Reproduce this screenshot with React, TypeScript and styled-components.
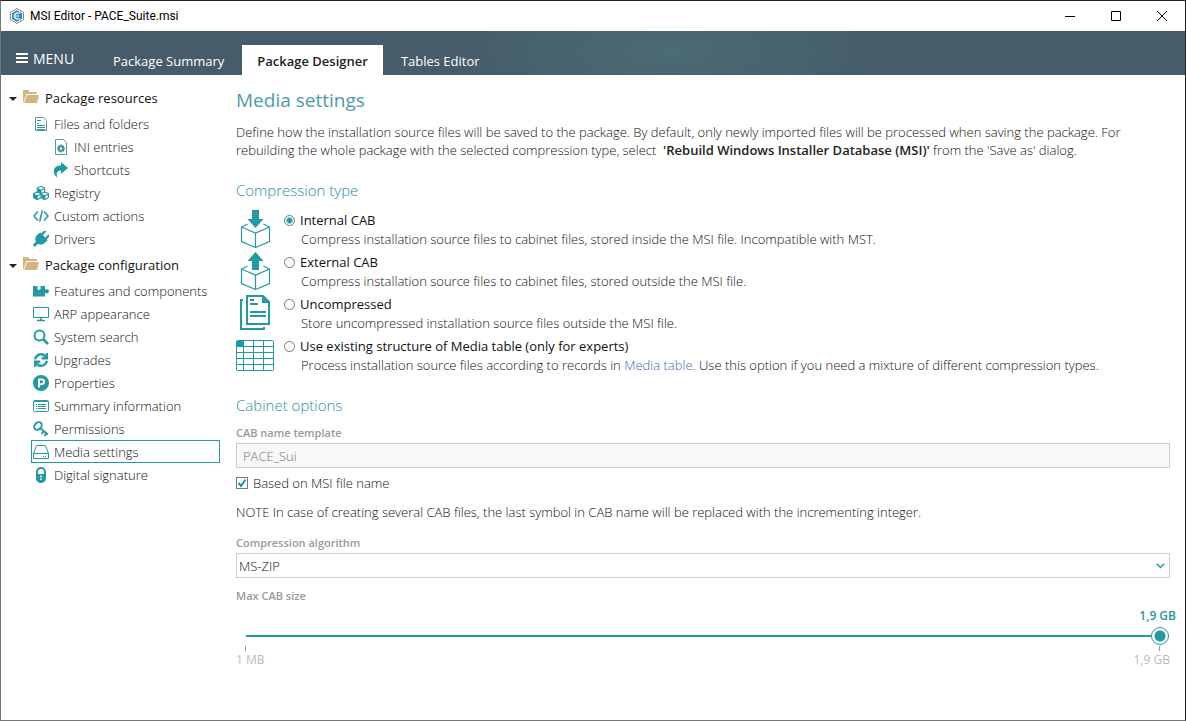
import React, { useState } from "react";
import styled, { createGlobalStyle, css } from "styled-components";
import { FaCubes, FaSync } from "react-icons/fa";

const teal = "#2299a3";
const font = '"Open Sans", "Noto Sans", sans-serif';

const GlobalStyle = createGlobalStyle`
  *, *::before, *::after { box-sizing: border-box; }
  body {
    margin: 0;
    background: #fff;
    color: #111;
    font-family: ${font};
    font-size: 13px;
    line-height: 18px;
  }
  button, input, select { font: inherit; color: inherit; margin: 0; }
`;

const Window = styled.div`
  display: flex;
  flex-direction: column;
  min-height: 100vh;
  border: 1px solid #222;
  border-left-color: #777;
  border-bottom-color: #777;
`;

const TitleBar = styled.header`
  display: flex;
  align-items: center;
  height: 30px;
  padding-left: 8px;
  gap: 5px;
`;

const WindowTitle = styled.span`
  flex: 1;
  font-family: Roboto, ${font};
  font-size: 12px;
  color: #000;
`;

const Controls = styled.div`
  display: flex;
`;

const WindowButton = styled.button`
  display: flex;
  align-items: center;
  justify-content: center;
  width: 46px;
  height: 30px;
  padding: 0;
  border: 0;
  background: none;
`;

const Ribbon = styled.nav`
  display: flex;
  align-items: flex-end;
  height: 44px;
  color: #fff;
  background:
    radial-gradient(ellipse 220px 70px at 670px 20px, #4b6b75 0%, transparent 100%),
    #465c6a;
`;

const MenuButton = styled.button`
  display: flex;
  align-items: center;
  gap: 5px;
  width: 96px;
  height: 32px;
  padding: 0 0 0 15px;
  border: 0;
  background: none;
  font-size: 14px;
`;

const Tabs = styled.div`
  display: flex;
  gap: 2px;
`;

const Tab = styled.button<{ $active?: boolean }>`
  height: 30px;
  padding: 2px 16px 0;
  border: 0;
  background: none;
  font-size: 13px;
  white-space: nowrap;
  ${(p) => p.$active && css`
    padding: 2px 15px 0;
    background: #fff;
    color: #222;
    font-weight: 600;
  `}
`;

const Body = styled.div`
  display: flex;
  flex: 1;
`;

const Sidebar = styled.aside`
  display: flex;
  flex-direction: column;
  gap: 2px;
  flex: 0 0 235px;
  padding: 10px 16px 10px 7px;
`;

const TreeRoot = styled.button`
  display: flex;
  align-items: center;
  width: 100%;
  height: 27px;
  padding: 0 0 1px;
  border: 0;
  background: none;
  text-align: left;
`;

const RootLabel = styled.span`
  padding-left: 6px;
`;

const TreeItem = styled.button<{ $nested?: boolean; $selected?: boolean }>`
  display: flex;
  align-items: center;
  gap: 5px;
  width: ${(p) => (p.$nested ? 169 : 189)}px;
  height: 23px;
  margin-left: ${(p) => (p.$nested ? 43 : 23)}px;
  padding: 0 1px;
  border: 1px solid ${(p) => (p.$selected ? teal : "transparent")};
  background: none;
  font-weight: 300;
  text-align: left;
  white-space: nowrap;

  svg {
    flex: none;
    color: ${teal};
  }
`;

const Main = styled.main`
  flex: 1;
  min-width: 0;
  padding: 12px 15px 20px 0;
`;

const Heading = styled.h1`
  margin: 0;
  font-size: 19px;
  line-height: 26px;
  font-weight: 400;
  color: #4f9aa8;
`;

const SectionTitle = styled.h2`
  margin: 0 0 10px;
  font-size: 15px;
  line-height: 20px;
  font-weight: 300;
  color: #2b8f9b;
`;

const Text = styled.p`
  margin: 0;
  font-weight: 300;

  strong { font-weight: 600; color: #222; }
`;

const Intro = styled(Text)`
  margin: 10px 0 21px;
`;

const Note = styled(Text)`
  margin: 11px 0 14px;
`;

const Options = styled.div`
  display: flex;
  flex-direction: column;
  gap: 4px;
  margin-bottom: 21px;
`;

const Option = styled.div`
  display: grid;
  grid-template-columns: 38px 12px 1fr;
  column-gap: 9px;
  height: 38px;
`;

const OptionText = styled.div`
  margin-left: -4px;
`;

const OptionLabel = styled.label`
  display: block;
  line-height: 20px;
`;

const Description = styled(Text)`
  padding-left: 1px;
`;

const Radio = styled.input`
  appearance: none;
  width: 11px;
  height: 11px;
  margin: 5px 0 0 1px;
  border: 1px solid #777;
  border-radius: 50%;

  &:checked {
    background: radial-gradient(circle, ${teal} 2px, #fff 4px);
  }
`;

const Link = styled.a`
  color: #4464b8;
  text-decoration: none;
`;

const FieldLabel = styled.label`
  display: block;
  font-size: 11px;
  line-height: 16px;
  font-weight: 600;
  color: #999;
`;

const TextField = styled.input`
  display: block;
  width: 100%;
  height: 25px;
  margin: 2px 0 6px;
  padding: 0 6px;
  border: 1px solid #ccc;
  border-radius: 0;
  background: #f8f8f8;
  font-weight: 300;

  &:disabled { color: #777; }
`;

const CheckLabel = styled.label`
  display: flex;
  align-items: center;
  gap: 5px;
  font-weight: 300;
`;

const CheckFrame = styled.span`
  display: grid;
  width: 12px;
  height: 12px;

  > * { grid-area: 1 / 1; }
  svg { pointer-events: none; visibility: hidden; }
  input:checked + svg { visibility: visible; }
`;

const CheckBox = styled.input`
  appearance: none;
  width: 12px;
  height: 12px;
  border: 1px solid #777;
`;

const SelectFrame = styled.div`
  display: grid;
  align-items: center;
  margin: 2px 0 10px;

  > * { grid-area: 1 / 1; }
  svg { justify-self: end; margin-right: 5px; pointer-events: none; }
`;

const Select = styled.select`
  appearance: none;
  width: 100%;
  height: 25px;
  padding: 0 20px 0 2px;
  border: 1px solid #ccc;
  border-radius: 0;
  background: #fff;
  font-weight: 300;
`;

const SliderValue = styled.output`
  display: block;
  margin: 3px -6px 2px 0;
  text-align: right;
  font-size: 12px;
  line-height: 18px;
  font-weight: 600;
  color: ${teal};
`;

const Slider = styled.input`
  appearance: none;
  display: block;
  width: calc(100% - 11px);
  height: 18px;
  margin-left: 10px;
  background: none;

  &::-webkit-slider-runnable-track {
    height: 2px;
    background: ${teal};
  }
  &::-webkit-slider-thumb {
    appearance: none;
    width: 18px;
    height: 18px;
    margin-top: -8px;
    border: 1px solid ${teal};
    border-radius: 50%;
    background: radial-gradient(circle, ${teal} 5px, #fff 6px);
  }
`;

const Ticks = styled.div`
  display: flex;
  justify-content: space-between;
  margin: 1px 10px 1px 9px;
`;

const Tick = styled.i`
  width: 1px;
  height: 5px;
  background: #999;
`;

const Scale = styled.div`
  display: flex;
  justify-content: space-between;
  font-size: 12px;
  line-height: 16px;
  color: #bbb;
`;

const Icon = ({ size = 16, children }: { size?: number; children: React.ReactNode }) => (
  <svg width={size} height={size} viewBox={`0 0 ${size} ${size}`} fill="none" stroke={teal} aria-hidden="true">
    {children}
  </svg>
);

const Folder = () => (
  <svg width="16" height="16" viewBox="0 0 16 16" fill="#d5b484" aria-hidden="true">
    <path d="M0 0h5.500l1 2H14v2H3.500L1 11 0 13z" />
    <path d="M4 5h12l-2 8H1.200z" />
  </svg>
);

const Caret = () => (
  <svg width="15" height="5" viewBox="0 0 15 5" fill="#222" aria-hidden="true">
    <path d="M1 1h8L5 5z" />
  </svg>
);

const icons = {
  files: (
    <Icon>
      <path d="M2.500 1.500h8l3 3v10h-11z" stroke="#5a9a9f" />
      <path d="M4 4.500h4M4 7.500h2M4 9.500h8M4 11.500h8M4 13.500h8" />
    </Icon>
  ),
  ini: (
    <Icon>
      <path d="M2.500.5h8l3 3v12h-11z" stroke="#5a9a9f" />
      <circle cx="8" cy="9.500" r="2.300" strokeWidth="2" stroke="#3f8f98" />
      <path
        d="M8 5.500v1.500M8 12v1.500M4 9.500h1.500M10.500 9.500H12M5.200 6.700l1 1M9.800 11.300l1 1M10.800 6.700l-1 1M6.200 11.300l-1 1"
        stroke="#3f8f98"
        strokeWidth="1.500"
      />
    </Icon>
  ),
  shortcut: (
    <Icon>
      <path d="M8 0l7 6-7 6V8.500C5 8.300 3 10 4 15.500-.5 12-1 3.500 8 3.500z" fill={teal} stroke="none" />
    </Icon>
  ),
  registry: <FaCubes size={16} />,
  actions: (
    <Icon>
      <path d="M4.800 3.500L1 8l3.800 4.500M11.200 3.500L15 8l-3.800 4.500M9.300 2.500L6.700 13.500" strokeWidth="1.500" />
    </Icon>
  ),
  drivers: (
    <Icon>
      <g transform="rotate(47 8 8)" fill={teal} stroke="none">
        <path d="M4 0a1 1 0 0 1 2.200 0v4.500H4zM9.800 0A1 1 0 0 1 12 0v4.500H9.800z" />
        <path d="M2.500 4h11v4.500c0 2.500-1.800 4.500-4 5V18h-3v-4.500c-2.200-.5-4-2.500-4-5z" />
      </g>
    </Icon>
  ),
  features: (
    <Icon>
      <path
        d="M0 3h4.500v1.500a1.700 1.700 0 1 0 3 0V3H12v3.500h1a2 2 0 1 1 0 3.500h-1v3.500H0z"
        fill={teal}
        stroke="none"
      />
    </Icon>
  ),
  arp: (
    <Icon>
      <path d="M.5 1.500h15v10H.5z" />
      <path d="M8 12v2M4 14.500h8" strokeWidth="1.500" />
    </Icon>
  ),
  search: (
    <Icon>
      <circle cx="6.500" cy="6.500" r="5" strokeWidth="2" />
      <path d="M10 10l5 5" strokeWidth="2.500" />
    </Icon>
  ),
  upgrades: (
    <Icon>
      <FaSync x="1" y="1" size={14} strokeWidth="20" />
    </Icon>
  ),
  properties: (
    <Icon>
      <circle cx="8" cy="8" r="8" fill={teal} stroke="none" />
      <path d="M6 12.500V4.500h2.700a2.300 2.300 0 0 1 0 4.700H6" stroke="#fff" strokeWidth="1.900" />
    </Icon>
  ),
  summary: (
    <Icon>
      <rect x=".5" y="2.500" width="15" height="11" rx="1" />
      <path d="M1 3.500h14M3 6.500h1M5 6.500h8M3 8.500h1M5 8.500h8M3 10.500h1M5 10.500h8" />
    </Icon>
  ),
  permissions: (
    <Icon>
      <ellipse cx="5" cy="5" rx="4.200" ry="3.200" transform="rotate(-45 5 5)" strokeWidth="2" />
      <path d="M7.500 7.500l7.500 6M10.500 10.500l-2 2.500M13 12.500L11.500 15" strokeWidth="2" />
    </Icon>
  ),
  media: (
    <Icon>
      <path d="M.5 9.500L3.500 1.500h9l3 8v5H.5zM.5 9.500h15M10 12.500h1M12 12.500h1" />
    </Icon>
  ),
  signature: (
    <Icon>
      <path d="M4 8V5a4 4 0 0 1 8 0v3" strokeWidth="2" />
      <path d="M3 7h10v4.500c0 2.500-2.500 4.500-5 4.500s-5-2-5-4.500z" fill={teal} stroke="none" />
      <path d="M8 8.500v2M8 11.500v1.500" stroke="#fff" strokeWidth="1.500" />
    </Icon>
  ),
};

const Box = () => (
  <path
    d="M11.500 14L5.500 17v14.500l14 6 14-6V17l-6-3M5.500 17l14 6 14-6M19.500 23v14.500"
    strokeWidth="1.200"
  />
);

const optionIcons = {
  internal: (
    <Icon size={38}>
      <Box />
      <path d="M16 0h7v9h4.500L19.500 18 11.500 9H16z" fill={teal} stroke="none" />
    </Icon>
  ),
  external: (
    <Icon size={38}>
      <Box />
      <path d="M16 18h7V9h4.500L19.500 0 11.500 9H16z" fill={teal} stroke="none" />
    </Icon>
  ),
  uncompressed: (
    <Icon size={38}>
      <path d="M11 2h16l6 6v22H11z" strokeWidth="2" />
      <path d="M26 1l8 8h-8z" fill={teal} stroke="none" />
      <path d="M7 6H5v29h23v-2" strokeWidth="2" />
      <path d="M14 6h4M14 10h8M14 18h16M14 22h16" strokeWidth="2" />
    </Icon>
  ),
  table: (
    <Icon size={38}>
      <rect x=".5" y="4.500" width="37" height="30" rx="1" />
      <path d="M7.500 4.500v30M17.500 4.500v30M27.500 4.500v30M.5 10.500h37M.5 16.500h37M.5 22.500h37M.5 28.500h37" />
      <path d="M1 5h7v6H1z" fill={teal} stroke="none" />
    </Icon>
  ),
};

type IconName = keyof typeof icons;
type Item = { label: string; icon: IconName; nested?: boolean };

const tree: { label: string; items: Item[] }[] = [
  {
    label: "Package resources",
    items: [
      { label: "Files and folders", icon: "files" },
      { label: "INI entries", icon: "ini", nested: true },
      { label: "Shortcuts", icon: "shortcut", nested: true },
      { label: "Registry", icon: "registry" },
      { label: "Custom actions", icon: "actions" },
      { label: "Drivers", icon: "drivers" },
    ],
  },
  {
    label: "Package configuration",
    items: [
      { label: "Features and components", icon: "features" },
      { label: "ARP appearance", icon: "arp" },
      { label: "System search", icon: "search" },
      { label: "Upgrades", icon: "upgrades" },
      { label: "Properties", icon: "properties" },
      { label: "Summary information", icon: "summary" },
      { label: "Permissions", icon: "permissions" },
      { label: "Media settings", icon: "media" },
      { label: "Digital signature", icon: "signature" },
    ],
  },
];

const options: { id: keyof typeof optionIcons; label: string; text: React.ReactNode }[] = [
  {
    id: "internal",
    label: "Internal CAB",
    text: "Compress installation source files to cabinet files, stored inside the MSI file. Incompatible with MST.",
  },
  {
    id: "external",
    label: "External CAB",
    text: "Compress installation source files to cabinet files, stored outside the MSI file.",
  },
  {
    id: "uncompressed",
    label: "Uncompressed",
    text: "Store uncompressed installation source files outside the MSI file.",
  },
  {
    id: "table",
    label: "Use existing structure of Media table (only for experts)",
    text: (
      <>
        Process installation source files according to records in <Link href="#media">Media table</Link>. Use this
        option if you need a mixture of different compression types.
      </>
    ),
  },
];

function WindowControls() {
  return (
    <Controls>
      <WindowButton type="button" aria-label="Minimize">
        <svg width="10" height="10" stroke="#000"><path d="M0 5.500h10" /></svg>
      </WindowButton>
      <WindowButton type="button" aria-label="Maximize">
        <svg width="10" height="10" stroke="#000" fill="none"><path d="M.5.5h9v9h-9z" /></svg>
      </WindowButton>
      <WindowButton type="button" aria-label="Close">
        <svg width="10" height="10" stroke="#000"><path d="M0 0l10 10M10 0L0 10" /></svg>
      </WindowButton>
    </Controls>
  );
}

export default function App() {
  const [selected, setSelected] = useState("Media settings");
  const [type, setType] = useState("internal");
  const [based, setBased] = useState(true);

  return (
    <>
      <GlobalStyle />
      <Window>
        <TitleBar>
          <svg width="16" height="16" viewBox="0 0 16 16" fill="none" aria-hidden="true">
            <path d="M8 .6l6.500 3.700v7.400L8 15.400 1.500 11.700V4.300z" stroke="#7d8389" />
            <path d="M8 2.300l5 2.900v5.600l-5 2.900-5-2.900V5.200z" fill="#2a88bd" />
            <path d="M11 5.200H7.300L5.300 7v2l2 1.800H11M6 8h4.500" stroke="#fff" strokeWidth="1.200" />
          </svg>
          <WindowTitle>MSI Editor - PACE_Suite.msi</WindowTitle>
          <WindowControls />
        </TitleBar>
        <Ribbon>
          <MenuButton type="button">
            <svg width="12" height="12" viewBox="0 0 12 12" stroke="#fff" strokeWidth="2" aria-hidden="true">
              <path d="M0 1h12M0 5h12M0 9h12" />
            </svg>
            MENU
          </MenuButton>
          <Tabs>
            <Tab type="button">Package Summary</Tab>
            <Tab type="button" $active>Package Designer</Tab>
            <Tab type="button">Tables Editor</Tab>
          </Tabs>
        </Ribbon>
        <Body>
          <Sidebar>
            {tree.map((group) => (
              <div key={group.label}>
                <TreeRoot type="button">
                  <Caret />
                  <Folder />
                  <RootLabel>{group.label}</RootLabel>
                </TreeRoot>
                {group.items.map((item) => (
                  <TreeItem
                    key={item.label}
                    type="button"
                    $nested={item.nested}
                    $selected={item.label === selected}
                    onClick={() => setSelected(item.label)}
                  >
                    {icons[item.icon]}
                    {item.label}
                  </TreeItem>
                ))}
              </div>
            ))}
          </Sidebar>
          <Main>
            <Heading>Media settings</Heading>
            <Intro>
              Define how the installation source files will be saved to the package. By default, only newly imported
              files will be processed when saving the package. For rebuilding the whole package with the selected
              compression type, select &nbsp;<strong>'Rebuild Windows Installer Database (MSI)'</strong> from the 'Save
              as' dialog.
            </Intro>
            <SectionTitle>Compression type</SectionTitle>
            <Options>
              {options.map((o) => (
                <Option key={o.id}>
                  {optionIcons[o.id]}
                  <Radio
                    type="radio"
                    name="compression"
                    id={o.id}
                    checked={type === o.id}
                    onChange={() => setType(o.id)}
                  />
                  <OptionText>
                    <OptionLabel htmlFor={o.id}>{o.label}</OptionLabel>
                    <Description>{o.text}</Description>
                  </OptionText>
                </Option>
              ))}
            </Options>
            <SectionTitle>Cabinet options</SectionTitle>
            <FieldLabel htmlFor="cab-name">CAB name template</FieldLabel>
            <TextField id="cab-name" defaultValue="PACE_Sui" disabled={based} />
            <CheckLabel>
              <CheckFrame>
                <CheckBox type="checkbox" checked={based} onChange={(e) => setBased(e.target.checked)} />
                <svg width="12" height="12" viewBox="0 0 12 12" fill="none" stroke={teal} strokeWidth="2">
                  <path d="M2.500 6l2.500 3 4.500-6.500" />
                </svg>
              </CheckFrame>
              Based on MSI file name
            </CheckLabel>
            <Note>
              NOTE In case of creating several CAB files, the last symbol in CAB name will be replaced with the
              incrementing integer.
            </Note>
            <FieldLabel htmlFor="algorithm">Compression algorithm</FieldLabel>
            <SelectFrame>
              <Select id="algorithm" defaultValue="MS-ZIP">
                <option>MS-ZIP</option>
              </Select>
              <svg width="9" height="6" viewBox="0 0 9 6" fill="none" stroke={teal} strokeWidth="1.500">
                <path d="M.7.7l3.800 3.800L8.300.7" />
              </svg>
            </SelectFrame>
            <FieldLabel htmlFor="max-size">Max CAB size</FieldLabel>
            <SliderValue htmlFor="max-size">1,9 GB</SliderValue>
            <Slider id="max-size" type="range" min={1} max={1946} defaultValue={1946} />
            <Ticks>
              <Tick />
              <Tick />
            </Ticks>
            <Scale>
              <span>1 MB</span>
              <span>1,9 GB</span>
            </Scale>
          </Main>
        </Body>
      </Window>
    </>
  );
}
